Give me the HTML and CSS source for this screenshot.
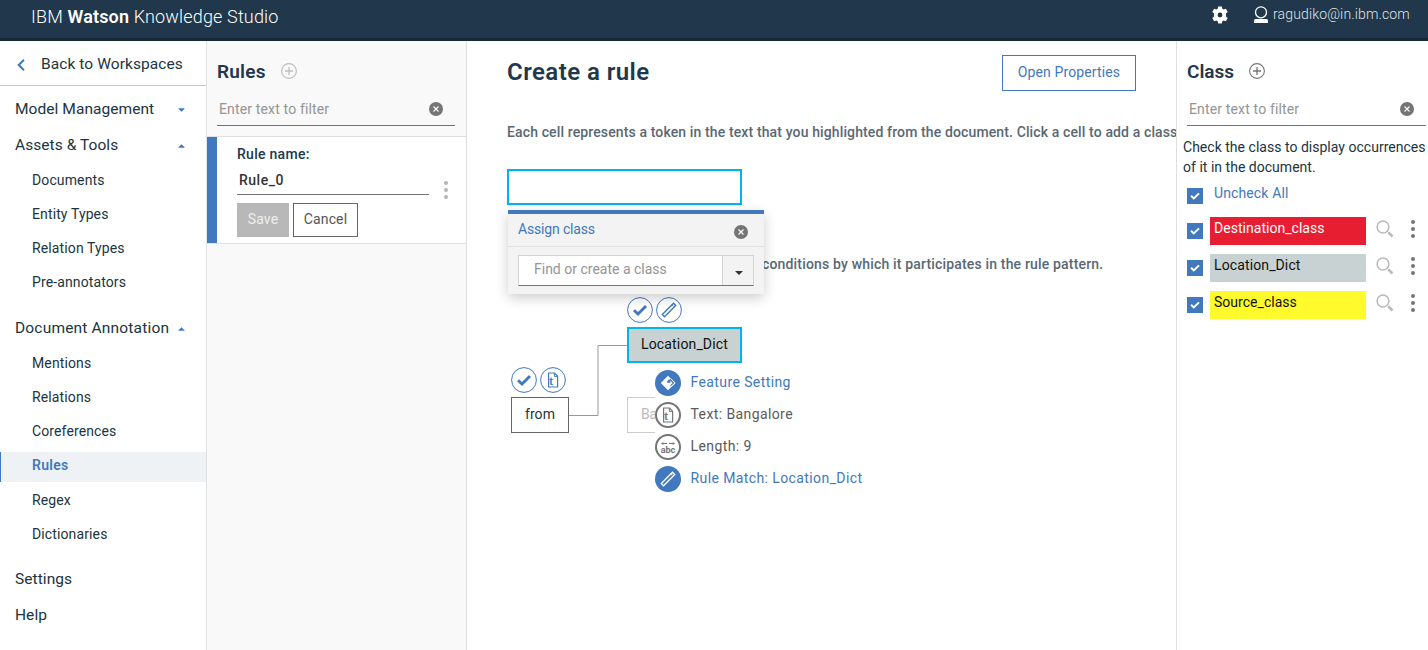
FILE: index.html
```html
<!DOCTYPE html>
<html lang="en">
<head>
<meta charset="utf-8">
<title>IBM Watson Knowledge Studio</title>
<link rel="stylesheet" href="styles.css">
</head>
<body>
<svg class="defs" aria-hidden="true">
  <symbol id="plus" viewBox="0 0 16 16"><circle cx="8" cy="8" r="7.4" fill="none" stroke="currentColor" stroke-width="1.1"/><path d="M8 4v8M4 8h8" stroke="currentColor" stroke-width="1.3"/></symbol>
  <symbol id="clear" viewBox="0 0 14 14"><circle cx="7" cy="7" r="7" fill="#757575"/><path d="M4.5 4.5l5 5M9.5 4.5l-5 5" stroke="#fff" stroke-width="1.1"/></symbol>
  <symbol id="dots" viewBox="0 0 4 18"><circle cx="2" cy="2" r="2"/><circle cx="2" cy="9" r="2"/><circle cx="2" cy="16" r="2"/></symbol>
  <symbol id="down" viewBox="0 0 8 4"><path d="M0 0h8L4 4z" fill="currentColor"/></symbol>
  <symbol id="up" viewBox="0 0 8 4"><path d="M0 4h8L4 0z" fill="currentColor"/></symbol>
  <symbol id="lens" viewBox="0 0 18 18"><circle cx="7" cy="7" r="5.9" fill="none" stroke="#bababa" stroke-width="1.5"/><path d="M11 11l1.5 1.5" stroke="#bababa" stroke-width="1"/><path d="M12.3 12.3l4.2 4.200" stroke="#bababa" stroke-width="2.600"/></symbol>
  <symbol id="check" viewBox="0 0 26 26"><circle cx="13" cy="13" r="12.4" fill="#fff" stroke="#4178be"/><path d="M7 13.2l4 3.8 8-8" fill="none" stroke="#4178be" stroke-width="2.9"/></symbol>
  <symbol id="ruler" viewBox="0 0 26 26"><path d="M6.300 17.500L17.500 6.300l2.200 2.200L8.500 19.700z" fill="none" stroke="currentColor" stroke-width="1.400"/><path d="M16 7.800l1.400 1.400" stroke="currentColor" stroke-width=".9"/></symbol>
  <symbol id="textdoc" viewBox="0 0 26 26"><path d="M8.600 6h6l3 3.200V20h-9z" fill="none" stroke="currentColor" stroke-width="1.200"/><path d="M14.400 6v3.400h3.200" fill="none" stroke="currentColor"/><text x="9.300" y="18" class="doc-letter">t</text></symbol>
</svg>

<header class="topbar">
  <div class="brand">IBM <b>Watson</b> Knowledge Studio</div>
  <svg class="gear" viewBox="0 0 18 18"><path fill="#fff" fill-rule="evenodd" d="M7.200 .5h3.600l.5 2.300 1.300.8 2.300-.8 1.800 3.100-1.700 1.600v3l1.700 1.600-1.800 3.100-2.300-.8-1.300.8-.5 2.300H7.200l-.5-2.300-1.300-.8-2.300.8-1.800-3.100L3 10.500v-3L1.300 5.900l1.800-3.100 2.300.8 1.300-.8zM9 6.600a2.400 2.400 0 1 0 0 4.800 2.400 2.400 0 0 0 0-4.800z"/></svg>
  <svg class="user" viewBox="0 0 14 18"><circle cx="7" cy="6.300" r="5.500" fill="none" stroke="#fff" stroke-width="1.300"/><path d="M1.500 13h11q1.500 0 1.500 1.500V17H0v-2.500Q0 13 1.500 13z" fill="#fff"/></svg>
  <span class="email">ragudiko@in.ibm.com</span>
</header>

<div class="shell">
  <nav class="nav">
    <a class="back"><svg viewBox="0 0 8 12"><path d="M7 .8L1.700 6 7 11.200" fill="none" stroke="#4178be" stroke-width="2"/></svg><span>Back to Workspaces</span></a>
    <div class="head"><span>Model Management</span><svg><use href="#down"/></svg></div>
    <div class="head"><span>Assets &amp; Tools</span><svg><use href="#up"/></svg></div>
    <a class="sub">Documents</a>
    <a class="sub">Entity Types</a>
    <a class="sub">Relation Types</a>
    <a class="sub">Pre-annotators</a>
    <div class="head annotation"><span>Document Annotation</span><svg><use href="#up"/></svg></div>
    <a class="sub">Mentions</a>
    <a class="sub">Relations</a>
    <a class="sub">Coreferences</a>
    <a class="sub active">Rules</a>
    <a class="sub after">Regex</a>
    <a class="sub">Dictionaries</a>
    <div class="head settings"><span>Settings</span></div>
    <div class="head"><span>Help</span></div>
  </nav>

  <section class="rules">
    <div class="title"><h2>Rules</h2><svg class="add pale"><use href="#plus"/></svg></div>
    <div class="filter"><span>Enter text to filter</span><svg><use href="#clear"/></svg></div>
    <div class="rule-card">
      <div class="rule-form">
        <div class="rule-label">Rule name:</div>
        <div class="rule-input">Rule_0</div>
        <div class="buttons"><button class="save">Save</button><button class="cancel">Cancel</button></div>
      </div>
      <svg class="dots"><use href="#dots"/></svg>
    </div>
  </section>

  <main class="editor">
    <div class="editor-head"><h1>Create a rule</h1><button class="open">Open Properties</button></div>
    <p class="note">Each cell represents a token in the text that you highlighted from the document. Click a cell to add a class</p>
    <div class="cell-empty"></div>
    <p class="note note-cond">conditions by which it participates in the rule pattern.</p>

    <div class="popup">
      <div class="popup-head"><span>Assign class</span><svg><use href="#clear"/></svg></div>
      <div class="combo"><span>Find or create a class</span><i><svg><use href="#down"/></svg></i></div>
    </div>

    <div class="canvas">
      <svg class="wire" viewBox="0 0 58 72"><path d="M0 70.500h29V.5H58" fill="none" stroke="#999"/></svg>
      <svg class="badge b1"><use href="#check"/></svg>
      <svg class="badge b2" viewBox="0 0 26 26"><circle cx="13" cy="13" r="12.400" class="ring"/><use href="#ruler"/></svg>
      <svg class="badge b3"><use href="#check"/></svg>
      <svg class="badge b4" viewBox="0 0 26 26"><circle cx="13" cy="13" r="12.400" class="ring"/><use href="#textdoc"/></svg>
      <div class="node loc">Location_Dict</div>
      <div class="node from">from</div>
      <div class="node ghost">Ba</div>
      <ul class="features">
        <li class="blue"><svg viewBox="0 0 26 26"><circle cx="13" cy="13" r="13" fill="#4178be"/><path d="M5.800 13L13 5.800l7.200 7.200-7.200 7.200z" fill="#fff"/><path d="M12 12.800q0-3 3-3.300V7.800l4.200 5.200-3.700 3.600v-1.500l2.100-2.200-2.200-2.500v2.400z" fill="#4178be"/><path d="M15.500 8.300l4.700 4.700-4.200 4.200" fill="none" stroke="#fff"/></svg><span>Feature Setting</span></li>
        <li><svg viewBox="0 0 26 26"><circle cx="13" cy="13" r="12" class="gray-ring"/><use href="#textdoc"/></svg><span>Text: Bangalore</span></li>
        <li><svg viewBox="0 0 26 26"><circle cx="13" cy="13" r="12" class="gray-ring"/><path d="M7 9.500h5M14 9.500h5" stroke="currentColor"/><path d="M6 9.500l2.300-1.400v2.800zM20 9.500l-2.300-1.400v2.800z" fill="currentColor"/><text x="13" y="18.500" class="abc">abc</text></svg><span>Length: 9</span></li>
        <li class="blue"><svg viewBox="0 0 26 26"><circle cx="13" cy="13" r="13" fill="#4178be"/><g color="#fff"><use href="#ruler"/></g></svg><span>Rule Match: Location_Dict</span></li>
      </ul>
    </div>
  </main>

  <aside class="classes">
    <div class="title"><h2>Class</h2><svg class="add"><use href="#plus"/></svg></div>
    <div class="filter"><span>Enter text to filter</span><svg><use href="#clear"/></svg></div>
    <p class="hint">Check the class to display occurrences<br>of it in the document.</p>
    <div class="all"><i class="box"><svg viewBox="0 0 16 16"><path d="M4 7.700l2.800 2.700L12 5.400" /></svg></i><span>Uncheck All</span></div>
    <div class="class-row"><i class="box"><svg viewBox="0 0 16 16"><path d="M4 7.700l2.800 2.700L12 5.400"/></svg></i><span class="chip red">Destination_class</span><svg class="lens"><use href="#lens"/></svg><svg class="dots"><use href="#dots"/></svg></div>
    <div class="class-row"><i class="box"><svg viewBox="0 0 16 16"><path d="M4 7.700l2.800 2.700L12 5.400"/></svg></i><span class="chip gray">Location_Dict</span><svg class="lens"><use href="#lens"/></svg><svg class="dots"><use href="#dots"/></svg></div>
    <div class="class-row"><i class="box"><svg viewBox="0 0 16 16"><path d="M4 7.700l2.800 2.700L12 5.400"/></svg></i><span class="chip yellow">Source_class</span><svg class="lens"><use href="#lens"/></svg><svg class="dots"><use href="#dots"/></svg></div>
  </aside>
</div>
</body>
</html>
```
FILE: styles.css
```css
* { box-sizing: border-box; }
body { margin: 0; width: 1428px; height: 650px; overflow: hidden; background: #fff; color: #20343e; font: 14px/20px Roboto, "Liberation Sans", sans-serif; letter-spacing: .12px; }
h1, h2, p, ul { margin: 0; padding: 0; }
button { font: inherit; letter-spacing: inherit; padding: 0; }
svg { display: block; flex: none; }
.defs { position: absolute; width: 0; height: 0; }

.topbar { display: flex; height: 41px; background: #20374c; border-bottom: 3px solid #182a39; color: #fff; }
.brand { padding: 5px 0 0 31px; width: 1211px; font-size: 18px; line-height: 24px; font-weight: 300; letter-spacing: .16px; }
.brand b { font-weight: 600; }
.gear { width: 18px; height: 18px; margin-top: 6px; }
.user { width: 14px; height: 18px; margin: 6px 5px 0 25px; }
.email { padding-top: 4px; color: #dfe4e8; font-weight: 300; letter-spacing: .14px; }

.shell { display: flex; height: 609px; }
.nav { width: 207px; border-right: 1px solid #dfe3e6; }
.back { display: flex; align-items: center; height: 45px; padding-left: 17px; border-bottom: 1px solid #c7c7c7; margin-bottom: 5px; font-size: 15.5px; letter-spacing: .08px; }
.back span { padding-top: 2px; }
.back svg { width: 8px; height: 12px; margin: 3px 16px 0 0; }
.head { display: flex; align-items: center; justify-content: space-between; height: 36px; padding: 0 21px 0 15px; font-size: 15.5px; letter-spacing: .06px; white-space: nowrap; }
.head svg { width: 7px; height: 4px; color: #4178be; margin-top: 2px; }
.sub { display: block; height: 30px; margin-top: 4px; padding-left: 32px; line-height: 27px; }
.annotation { margin-top: 11px; letter-spacing: .18px; }
.active { padding-left: 31px; border-left: 1px solid #4178be; background: #eff2f5; color: #4178be; font-weight: 600; letter-spacing: .3px; }
.after { margin-top: 5px; }
.settings { margin-top: 10px; }

.rules { width: 260px; background: #f9f9f9; border-right: 1px solid #dfdfdf; }
.title { display: flex; padding: 18px 0 0 10px; height: 50px; }
h2 { color: #20374c; font-size: 19px; line-height: 26px; font-weight: 600; letter-spacing: .2px; }
.classes h2 { letter-spacing: 0; }
.add { width: 16px; height: 16px; margin: 4px 0 0 15px; color: #757575; }
.pale { color: #bdbdbd; }
.filter { display: flex; align-items: center; height: 35px; width: 238px; margin-left: 10px; padding: 2px 12px 0 2px; border-bottom: 1px solid #757575; color: #949494; justify-content: space-between; letter-spacing: .15px; }
.filter svg { width: 14px; height: 14px; }
.rules .filter { margin-bottom: 10px; }
.rule-card { display: flex; justify-content: space-between; height: 108px; background: #fff; border: solid #dfdfdf; border-width: 1px 0; }
.rule-form { width: 222px; border-left: 10px solid #4178be; padding: 7px 0 0 20px; }
.rule-label { font-weight: 500; color: #20374c; letter-spacing: .28px; }
.rule-input { height: 31px; padding: 6px 2px; border-bottom: 1px solid #757575; font-weight: 500; color: #333; letter-spacing: .5px; }
.buttons { display: flex; gap: 4px; margin-top: 8px; }
.buttons button { height: 34px; border: 1px solid #b8b8b8; padding-bottom: 3px; }
.save { width: 52px; background: #b8b8b8; color: #eee; }
.buttons .cancel { width: 65px; background: #fff; border-color: #666; color: #555; }
.dots { width: 4px; height: 18px; fill: #757575; }
.rules .dots { fill: #b5b5b5; margin: 44px 18px 0 0; }

.editor { position: relative; width: 709px; overflow: hidden; padding: 14px 40px 0; }
.editor-head { display: flex; justify-content: space-between; height: 67px; }
h1 { color: #20374c; font-size: 24px; line-height: 34px; font-weight: 600; letter-spacing: .44px; }
.open { width: 134px; height: 36px; background: #fff; border: 1px solid #4178be; color: #4178be; padding-bottom: 2px; }
.note { white-space: nowrap; color: #5a6872; font-weight: 500; letter-spacing: .125px; }
.cell-empty { width: 235px; height: 36px; margin-top: 27px; border: 2px solid #00b4ef; }
.note-cond { margin: 49px 0 0 255px; letter-spacing: .17px; }
.popup { position: absolute; z-index: 2; left: 41px; top: 169px; width: 256px; height: 84px; background: #f3f3f3; border-top: 4px solid #4178be; box-shadow: 0 4px 12px rgba(0,0,0,.2); }
.popup-head { display: flex; justify-content: space-between; height: 33px; padding: 5px 16px 0 10px; border-bottom: 1px solid #dfdfdf; color: #4178be; letter-spacing: -.16px; }
.popup-head svg { width: 14px; height: 14px; margin-top: 6px; }
.combo { display: flex; justify-content: space-between; width: 236px; height: 31px; margin: 8px 0 0 10px; border: 1px solid #d5d5d5; border-bottom-color: #757575; background: #fff; color: #949494; padding: 0 0 0 15px; line-height: 27px; letter-spacing: 0; }
.combo i { width: 31px; border-left: 1px solid #d5d5d5; background: #f3f3f3; padding: 15px 0 0 12px; color: #333; }
.combo i svg { width: 8px; height: 4px; }

/* rule diagram: coordinates are relative to the editor pane */
.canvas { position: absolute; inset: 0; }
.canvas > * { position: absolute; }
.wire { left: 102px; top: 304px; width: 58px; height: 72px; }
.badge { width: 26px; height: 26px; color: #4178be; }
.b1 { left: 160px; top: 256px; }
.b2 { left: 189px; top: 256px; }
.b3 { left: 44px; top: 326px; }
.b4 { left: 73px; top: 326px; }
.ring { fill: #fff; stroke: #4178be; }
.gray-ring { fill: #fff; stroke: #757575; stroke-width: 2; }
.doc-letter { font: 700 11px "Liberation Sans", sans-serif; fill: currentColor; }
.abc { font: 700 9px Roboto, sans-serif; text-anchor: middle; fill: currentColor; letter-spacing: 0; }
.node { height: 36px; border: 1px solid #666; background: #fff; line-height: 32px; text-align: center; }
.loc { left: 160px; top: 286px; width: 115px; border: 2px solid #00b4ef; background: #c8d2d2; color: #111; line-height: 30px; letter-spacing: .15px; }
.from { left: 44px; top: 356px; width: 58px; }
.ghost { left: 160px; top: 356px; width: 28px; border-color: #ccc; border-right: 0; color: #bbb; text-align: left; padding-left: 13px; letter-spacing: -.3px; }
.features { left: 188px; top: 326px; width: 230px; background: #fff; list-style: none; color: #5a5a5a; letter-spacing: .4px; }
.features li { display: flex; height: 32px; gap: 9.500px; padding-top: 3px; }
.features svg { width: 26px; height: 26px; color: #757575; }
.features span { line-height: 24px; }
.features .blue { color: #4178be; }

.classes { width: 252px; border-left: 1px solid #dfdfdf; }
.classes .filter { width: 239px; }
.hint { padding: 11px 0 0 6px; white-space: nowrap; letter-spacing: .02px; }
.all { display: flex; height: 40px; padding: 6px 0 0 10px; color: #4178be; }
.box { display: block; width: 16px; height: 16px; background: #4178be; flex: none; }
.box path { fill: none; stroke: #fff; stroke-width: 2; }
.all .box { margin: 5px 11px 0 0; }
.class-row { display: flex; height: 37px; padding-left: 10px; }
.class-row .box { margin: 6px 7px 0 0; }
.chip { width: 156px; height: 28px; padding-left: 4px; line-height: 23px; color: #111; letter-spacing: .03px; }
.red { background: #e71d32; color: #fff; }
.gray { background: #c8d2d2; letter-spacing: .12px; }
.yellow { background: #fffa2b; }
.lens { width: 18px; height: 18px; margin: 3px 17px 0 10px; }
.class-row .dots { margin-top: 3px; }
```
